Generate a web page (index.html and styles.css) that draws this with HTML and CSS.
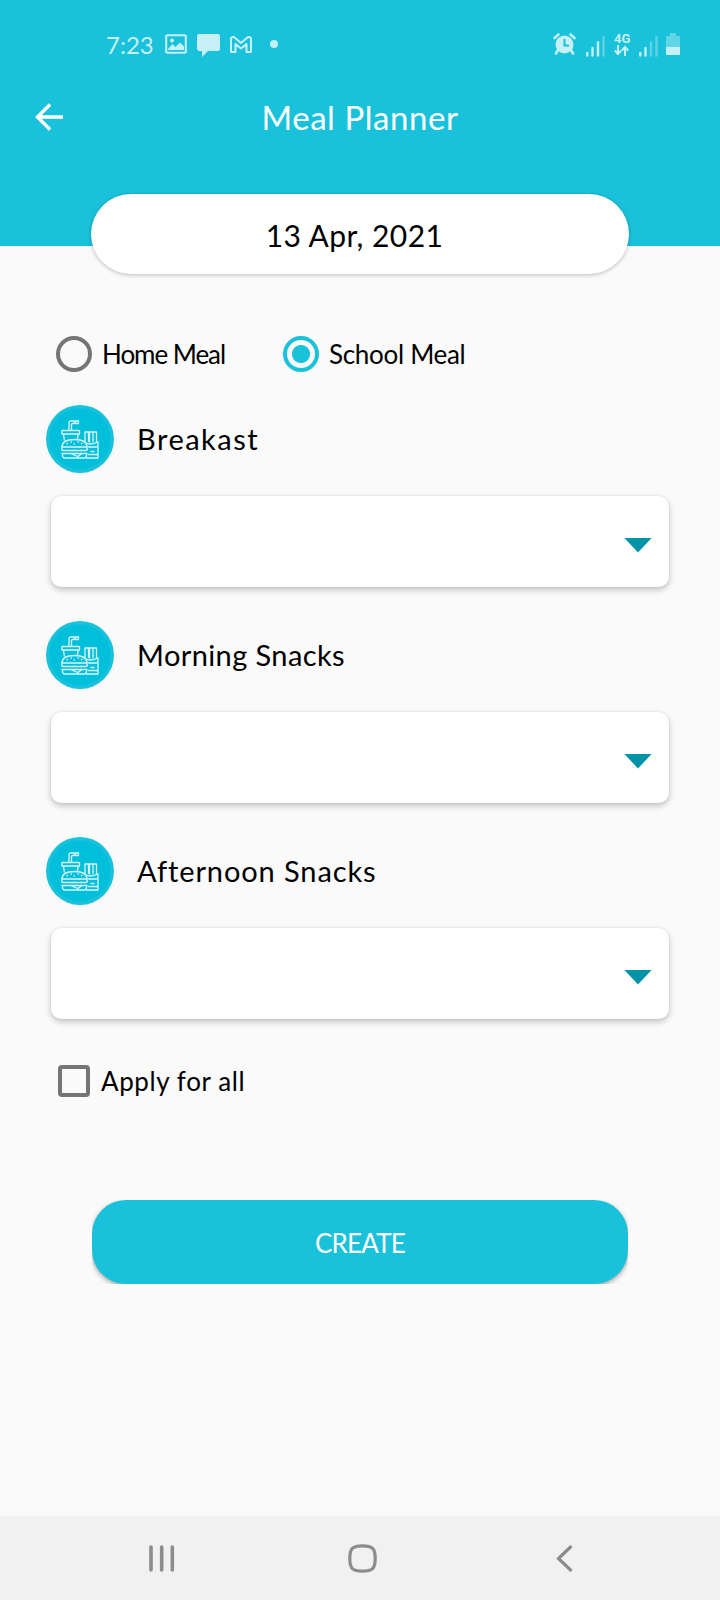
FILE: index.html
```html
<!DOCTYPE html>
<html lang="en">
<head>
    <meta charset="UTF-8">
    <meta name="viewport" content="width=device-width, initial-scale=1.0">
    <title>Meal Planner</title>
    <link rel="stylesheet" href="styles.css">
</head>
<body>
    <!-- shared meal icon -->
    <svg class="defs" width="0" height="0">
        <symbol id="meal" viewBox="0 0 68 68">
            <circle cx="34" cy="34" r="34" fill="#1ac1db"/>
            <circle cx="34" cy="34" r="30.5" fill="#00bfda"/>
            <g fill="none" stroke="#d8f7fb" stroke-width="1.3" stroke-linejoin="round" stroke-linecap="round">
                <path d="M23 25v-7q0-2 2-2h7.500v2.500h-6q-1 0-1 1V25M29 16v2.500"/>
                <path d="M16 25.500h17.500v3.500H16zM17.500 29l.8 6M32 29l-.4 4.500"/>
                <path d="M16 42q0-7.500 12.500-7.500T41 42zM16 42q-1 3.500 1.500 3.500h22q2.500 0 1.500-3.500M16 48.500h25M16.500 48.500v2q0 2.500 2.500 2.500h19q2.500 0 2.500-2.500v-2M24 48.500l8 3 4-3"/>
                <path d="M21 38.500h.5M25 37h.5M28 39h.5M32 37h.5M35.500 38.500h.5"/>
                <path d="M39 36v-9h3.500v9M43.500 37v-10H47v10M47 27h3.500v10M39 37.500q2 1.500 5.500 1.500t7.500-2v16H40M42.500 42h8.500M42.500 49.500H51M45 46.500h3"/>
            </g>
        </symbol>
    </svg>

    <header class="header">
        <div class="status-bar">
            <div class="status-left">
                <span class="clock">7:23</span>
                <svg width="22" height="20" viewBox="0 0 22 20">
                    <rect x="1.200" y="1.200" width="19.600" height="17.600" rx="1" fill="none" stroke="#c6f0f6" stroke-width="2"/>
                    <circle cx="7" cy="6.500" r="2" fill="#c6f0f6"/>
                    <path d="M3 15l4.500-5 3 3 4.500-4.500L19 12.500V16H3z" fill="#c6f0f6"/>
                </svg>
                <svg class="chat" width="23" height="23" viewBox="0 0 23 23">
                    <path d="M2 0h19q2 0 2 2v13q0 2-2 2H11l-6 6v-6H2q-2 0-2-2V2q0-2 2-2z" fill="#c6f0f6"/>
                </svg>
                <svg class="mail" width="22" height="17" viewBox="0 0 22 17">
                    <path d="M1 15.500V3q0-2 2-2h1l7 6 7-6h1q2 0 2 2v12.500q0 .5-.5.500H16.500V8L11 12.500 5.500 8v8H1.500Q1 16 1 15.500z" fill="none" stroke="#c6f0f6" stroke-width="2" stroke-linejoin="round"/>
                </svg>
                <span class="dot"></span>
            </div>
            <div class="status-right">
                <svg width="23" height="22" viewBox="0 0 23 22">
                    <circle cx="11.500" cy="11.500" r="9" fill="#c6f0f6"/>
                    <path d="M1.500 5l4-3.500M21.500 5l-4-3.500M5 17l-2 3.500M18 17l2 3.500" stroke="#c6f0f6" stroke-width="2.600" stroke-linecap="round"/>
                    <path d="M11.500 6v6.500H16" fill="none" stroke="#1ac1db" stroke-width="2"/>
                </svg>
                <svg class="signal" width="19" height="21" viewBox="0 0 19 21" stroke-width="2.400" stroke="#c6f0f6" stroke-linecap="round">
                    <path d="M1.300 17v2.500M6.500 12v7.500M12 6.500v13"/>
                    <path d="M17.500 1.300v18.200" opacity=".4"/>
                </svg>
                <div class="network">
                    <span>4G</span>
                    <svg width="15" height="11" viewBox="0 0 15 11" fill="none" stroke="#c6f0f6" stroke-width="2">
                        <path d="M4 0v9M.8 5.500L4 9l3.200-3.500M11 11V2M7.800 5.500L11 2l3.200 3.500"/>
                    </svg>
                </div>
                <svg class="signal" width="19" height="21" viewBox="0 0 19 21" stroke-width="2.400" stroke="#c6f0f6" stroke-linecap="round">
                    <path d="M1.300 17v2.500M6.500 12v7.500"/>
                    <path d="M12 6.500v13M17.500 1.300v18.200" opacity=".4"/>
                </svg>
                <svg class="battery" width="14" height="22" viewBox="0 0 14 22">
                    <path d="M4 0h6v3h3q1 0 1 1v10H0V4q0-1 1-1h3z" fill="#5fd5e6"/>
                    <path d="M0 14h14v7q0 1-1 1H1q-1 0-1-1z" fill="#c6f0f6"/>
                </svg>
            </div>
        </div>
        <div class="title-bar">
            <svg class="back" width="28" height="28" viewBox="0 0 28 28">
                <path d="M15 1.500L2.500 14 15 26.500M2.500 14H28" fill="none" stroke="#fff" stroke-width="3.400"/>
            </svg>
            <h1 class="title">Meal Planner</h1>
        </div>
    </header>

    <main class="content">
        <div class="date">13 Apr, 2021</div>

        <div class="radios">
            <div class="radio">
                <span class="circle"></span>
                <span class="label home">Home Meal</span>
            </div>
            <div class="radio">
                <span class="circle checked"></span>
                <span class="label school">School Meal</span>
            </div>
        </div>

        <section class="meal">
            <div class="meal-head">
                <svg width="68" height="68"><use href="#meal"/></svg>
                <span class="meal-name breakfast">Breakast</span>
            </div>
            <div class="select"><span class="arrow"></span></div>
        </section>
        <section class="meal">
            <div class="meal-head">
                <svg width="68" height="68"><use href="#meal"/></svg>
                <span class="meal-name morning">Morning Snacks</span>
            </div>
            <div class="select"><span class="arrow"></span></div>
        </section>
        <section class="meal">
            <div class="meal-head">
                <svg width="68" height="68"><use href="#meal"/></svg>
                <span class="meal-name afternoon">Afternoon Snacks</span>
            </div>
            <div class="select"><span class="arrow"></span></div>
        </section>

        <div class="apply">
            <span class="checkbox"></span>
            <span class="label all">Apply for all</span>
        </div>

        <button class="create">CREATE</button>
    </main>

    <nav class="nav-bar">
        <svg width="26" height="27" viewBox="0 0 26 27" stroke="#8c8c8c" stroke-width="3.600" stroke-linecap="round">
            <path d="M2 2v23M12.700 2v23M23.300 2v23"/>
        </svg>
        <svg class="home-key" width="29" height="29" viewBox="0 0 29 29">
            <path d="M14.500 1.800C24.500 1.800 27.200 4.500 27.200 14.500S24.500 27.200 14.500 27.200 1.800 24.500 1.800 14.500 4.500 1.800 14.500 1.800z" fill="none" stroke="#8c8c8c" stroke-width="3.200"/>
        </svg>
        <svg width="17" height="27" viewBox="0 0 17 27">
            <path d="M14.500 2L2.500 13.500l12 11.500" fill="none" stroke="#8c8c8c" stroke-width="3.200" stroke-linecap="round"/>
        </svg>
    </nav>
</body>
</html>
```
FILE: styles.css
```css
* {
    box-sizing: border-box;
}
body {
    margin: 0;
    height: 1600px;
    display: flex;
    flex-direction: column;
    font-family: Lato, "Open Sans", sans-serif;
    background-color: #fafafa;
    color: #000;
}
svg {
    display: block;
    flex-shrink: 0;
}
.defs {
    position: absolute;
}
.header {
    height: 246px;
    background-color: #1ac1db;
    color: white;
}
.status-bar {
    display: flex;
    justify-content: space-between;
    height: 87px;
    padding: 0 40px 0 106px;
    color: #c6f0f6;
}
.status-left, .status-right {
    display: flex;
    align-items: center;
    height: 88px;
}
.clock {
    width: 49px;
    margin-right: 10px;
    font-size: 24px;
    white-space: nowrap;
}
.chat {
    margin: 2px 10px 0 10px;
}
.mail {
    margin-right: 18px;
}
.dot {
    width: 8px;
    height: 8px;
    border-radius: 50%;
    background-color: #c6f0f6;
}
.signal {
    margin-left: 10px;
    margin-top: 4px;
}
.network {
    width: 16px;
    margin: 0 0 0 9px;
    font: bold 13px/13px Roboto, sans-serif;
}
.network span {
    display: block;
}
.network + .signal {
    margin-left: 9px;
}
.battery {
    margin-left: 8px;
}
.title-bar {
    display: grid;
    grid-template-columns: 1fr auto 1fr;
    align-items: center;
    height: 60px;
    padding: 0 35px;
}
.title {
    margin: 0;
    font-size: 33px;
    font-weight: normal;
    line-height: 40px;
    letter-spacing: 0.55px;
}
.content {
    flex: 1;
    padding: 0 46px;
}
.date {
    display: flex;
    align-items: center;
    justify-content: center;
    height: 80px;
    margin: -52px 45px 0;
    padding: 2px 11px 0 0;
    border-radius: 40px;
    background: white;
    box-shadow: 0 1px 4px rgba(0, 0, 0, 0.25);
    font-size: 30px;
    letter-spacing: 0.45px;
    position: relative;
}
.radios {
    display: flex;
    height: 36px;
    margin-top: 62px;
    padding-left: 10px;
}
.radio {
    display: flex;
    align-items: center;
    width: 227px;
}
.circle {
    width: 36px;
    height: 36px;
    margin-right: 10px;
    border: 4px solid #757575;
    border-radius: 50%;
}
.checked {
    border-color: #1ac1db;
    background: radial-gradient(circle, #1ac1db 8.5px, transparent 9.5px);
}
.label {
    font-size: 26px;
    line-height: 32px;
    white-space: nowrap;
}
.home {
    letter-spacing: -1.05px;
}
.school {
    letter-spacing: -0.3px;
}
.all {
    letter-spacing: 0.6px;
}
.meal {
    height: 216px;
}
.radios + .meal {
    margin-top: 33px;
}
.meal-head {
    display: flex;
    align-items: center;
    gap: 23px;
}
.meal-name {
    font-size: 29px;
    line-height: 36px;
}
.breakfast {
    letter-spacing: 1.5px;
}
.morning {
    letter-spacing: 0.4px;
}
.afternoon {
    letter-spacing: 0.9px;
}
.select {
    display: flex;
    align-items: center;
    justify-content: flex-end;
    height: 91px;
    margin: 23px 5px 0;
    padding: 7px 17px 0 0;
    border-radius: 10px;
    background: white;
    box-shadow: 0 3px 6px rgba(0, 0, 0, 0.22), 0 0 2px rgba(0, 0, 0, 0.12);
}
.arrow {
    width: 28px;
    height: 15px;
    background-color: #0093a7;
    clip-path: polygon(0 0, 100% 0, 50% 100%);
}
.apply {
    display: flex;
    align-items: center;
    height: 32px;
    margin-top: 12px;
    padding-left: 12px;
}
.checkbox {
    width: 32px;
    height: 32px;
    margin-right: 11px;
    border: 4px solid #757575;
    border-radius: 4px;
}
/* the shadow only shows in the rounded corners */
.create {
    display: block;
    width: 536px;
    height: 84px;
    margin: 103px auto 0;
    padding: 2px 0 0;
    border: none;
    border-radius: 34px;
    background-color: #1ac1db;
    box-shadow: 0 2px 5px rgba(0, 0, 0, 0.35);
    clip-path: inset(0);
    color: white;
    font-family: inherit;
    font-size: 26px;
    letter-spacing: -0.8px;
}
.nav-bar {
    display: flex;
    align-items: center;
    justify-content: space-between;
    height: 84px;
    padding: 0 147px 0 149px;
    background-color: #f1f1f1;
}
.home-key {
    margin-right: 6px;
}
```
